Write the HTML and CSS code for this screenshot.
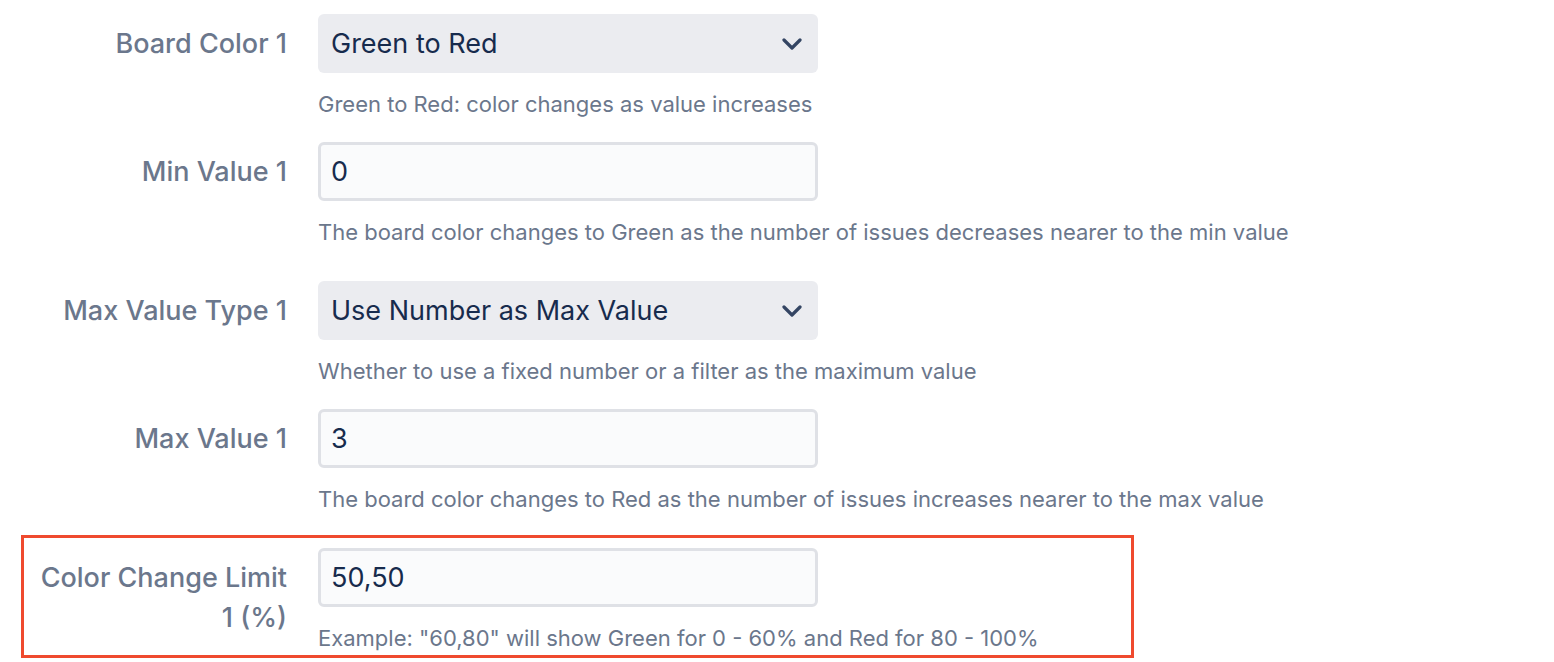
FILE: index.html
```html
<!DOCTYPE html>
<html lang="en">
<head>
  <meta charset="UTF-8" />
  <meta name="viewport" content="width=device-width, initial-scale=1.0" />
  <link rel="stylesheet" href="styles.css">
</head>
<body>
  <form class="settings">
    <div class="row row-select">
      <label class="label">Board Color 1</label>
      <div class="field">
        <div class="select">
          <span>Green to Red</span>
          <svg class="chevron" width="20" height="12" viewBox="0 0 20 12"><path d="M2 2 L10 10 L18 2" fill="none" stroke="#344563" stroke-width="3.2" stroke-linecap="round" stroke-linejoin="round"/></svg>
        </div>
        <div class="help">Green to Red: color changes as value increases</div>
      </div>
    </div>

    <div class="row row-input">
      <label class="label">Min Value 1</label>
      <div class="field">
        <input class="text" type="text" value="0">
        <div class="help">The board color changes to Green as the number of issues decreases nearer to the min value</div>
      </div>
    </div>

    <div class="row row-select">
      <label class="label">Max Value Type 1</label>
      <div class="field">
        <div class="select">
          <span>Use Number as Max Value</span>
          <svg class="chevron" width="20" height="12" viewBox="0 0 20 12"><path d="M2 2 L10 10 L18 2" fill="none" stroke="#344563" stroke-width="3.2" stroke-linecap="round" stroke-linejoin="round"/></svg>
        </div>
        <div class="help">Whether to use a fixed number or a filter as the maximum value</div>
      </div>
    </div>

    <div class="row row-input">
      <label class="label">Max Value 1</label>
      <div class="field">
        <input class="text" type="text" value="3">
        <div class="help">The board color changes to Red as the number of issues increases nearer to the max value</div>
      </div>
    </div>

    <div class="row highlight">
      <label class="label">Color Change Limit 1 (%)</label>
      <div class="field">
        <input class="text" type="text" value="50,50">
        <div class="help">Example: "60,80" will show Green for 0 - 60% and Red for 80 - 100%</div>
      </div>
    </div>
  </form>
</body>
</html>
```

FILE: styles.css
```css
body {
  margin: 0;
  background: #fff;
  font-family: Inter, "Noto Sans", sans-serif;
}
.settings {
  width: 1113px;
  margin-left: 21px;
  padding-top: 1px;
}
.row {
  display: grid;
  grid-template-columns: 253px 500px;
  column-gap: 31px;
  border: 3px solid transparent;
  padding: 10px 10px 5px;
}
.row-select {
  margin-bottom: 5px;
}
.row-input {
  margin-bottom: 16px;
}
.highlight {
  border-color: #ef4a2e;
}
.label {
  text-align: right;
  color: #6b778c;
  font-size: 27px;
  font-weight: 500;
  line-height: 40px;
  padding-top: 10px;
}
.field {
  display: flex;
  flex-direction: column;
}
.select {
  height: 59px;
  box-sizing: border-box;
  background: #ebecf0;
  border-radius: 6px;
  display: flex;
  align-items: center;
  justify-content: space-between;
  padding: 0 16px 0 13px;
  color: #172b4d;
  font-size: 27px;
}
.text {
  height: 59px;
  box-sizing: border-box;
  width: 500px;
  margin: 0;
  border: 3px solid #dfe1e6;
  border-radius: 6px;
  background: #fafbfc;
  padding: 0 10px;
  color: #172b4d;
  font-family: inherit;
  font-size: 27px;
  outline: none;
}
.help {
  margin-top: 19px;
  color: #6b778c;
  font-size: 22px;
  line-height: 24px;
  white-space: nowrap;
}
```
